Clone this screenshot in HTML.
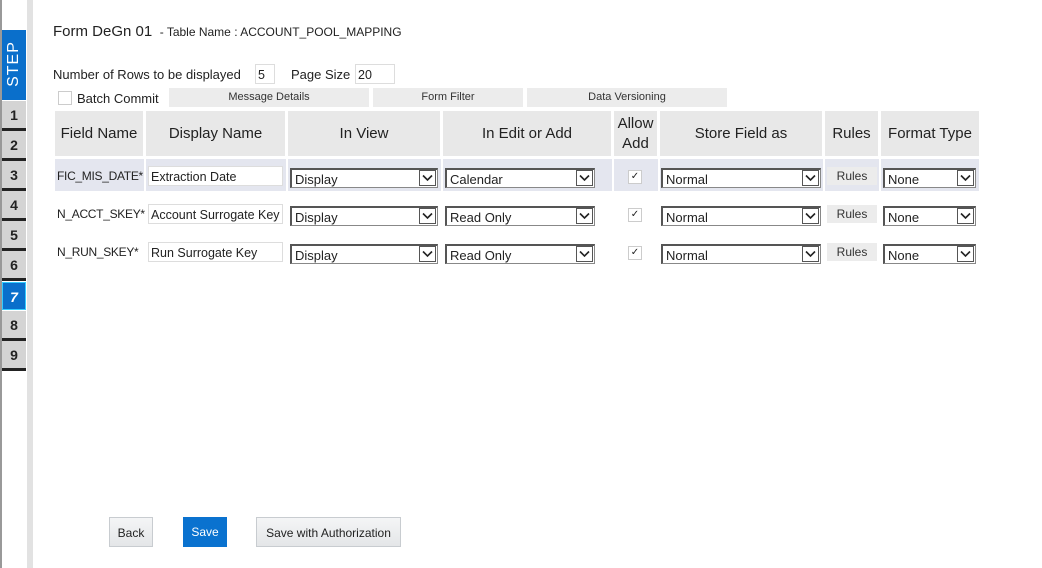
<!DOCTYPE html><html><head><style>
body{margin:0;width:1042px;height:568px;position:relative;background:#fff;font-family:"Liberation Sans",sans-serif;color:#222;overflow:hidden}
.a{position:absolute}
.step{position:absolute;left:2px;width:24px;height:27px;background:#d4d4d4;border-bottom:3px solid #222;font:bold 14px "Liberation Sans",sans-serif;text-align:center;line-height:28px;color:#222}
.th{position:absolute;top:111px;height:45px;background:#e8e8e8;font-size:15px;display:flex;align-items:center;justify-content:center;text-align:center;line-height:20px}
.sel{position:absolute;height:20px;border:1px solid #888;border-top:2px solid #555;border-left:2px solid #555;background:#fff;font-size:13px;line-height:20px;padding-left:3px;box-sizing:border-box}
.arr{position:absolute;right:1px;top:0px;width:17px;height:16px;border:1px solid #555;box-sizing:border-box;background:#fff}
.arr svg{position:absolute;left:2px;top:3px}
.inp{position:absolute;height:20px;border:1px solid #ddd;background:#fff;font-size:12.5px;line-height:20px;padding-left:2px;box-sizing:border-box;white-space:nowrap;overflow:hidden}
.btn{position:absolute;background:#ececec;font-size:11px;text-align:center;color:#333}
.cb{position:absolute;width:12px;height:12px;border:1px solid #ccc;background:#fff;font-size:10px;line-height:12px;text-align:center}
.fn{position:absolute;left:57px;font-size:12px;letter-spacing:-0.3px}
</style></head><body>
<div class="a" style="left:0;top:0;width:2px;height:568px;background:#999"></div>
<div class="a" style="left:27px;top:0;width:6px;height:568px;background:#e2e2e2"></div>
<div class="a" style="left:2px;top:30px;width:24px;height:70px;background:#0a6fcb;color:#fff"><div style="transform:rotate(-90deg);position:absolute;left:-18px;top:25px;width:60px;text-align:center;font-size:16px;letter-spacing:1px">STEP</div></div>
<div class="step" style="top:101px">1</div><div class="step" style="top:131px">2</div><div class="step" style="top:161px">3</div><div class="step" style="top:191px">4</div><div class="step" style="top:221px">5</div><div class="step" style="top:251px">6</div>
<div class="step" style="top:282px;background:#0a6fcb;color:#fff;border:1px solid #3cf;height:26px;width:22px;font-style:italic">7</div>
<div class="step" style="top:311px">8</div><div class="step" style="top:341px">9</div>

<div class="a" style="left:53px;top:23px;font-size:15px">Form DeGn 01 <span style="font-size:12px">&nbsp;- Table Name : ACCOUNT_POOL_MAPPING</span></div>
<div class="a" style="left:53px;top:67px;font-size:13px">Number of Rows to be displayed</div>
<div class="inp" style="left:255px;top:64px;width:20px">5</div>
<div class="a" style="left:291px;top:67px;font-size:13px">Page Size</div>
<div class="inp" style="left:355px;top:64px;width:40px">20</div>
<div class="cb" style="left:58px;top:91px"></div>
<div class="a" style="left:77px;top:91px;font-size:13px">Batch Commit</div>
<div class="btn" style="left:169px;top:88px;width:200px;height:19px;line-height:19px">Message Details</div>
<div class="btn" style="left:373px;top:88px;width:150px;height:19px;line-height:19px">Form Filter</div>
<div class="btn" style="left:527px;top:88px;width:200px;height:19px;line-height:19px">Data Versioning</div>

<div class="th" style="left:55px;width:88px">Field Name</div>
<div class="th" style="left:146px;width:139px">Display Name</div>
<div class="th" style="left:288px;width:152px">In View</div>
<div class="th" style="left:443px;width:168px">In Edit or Add</div>
<div class="th" style="left:614px;width:43px">Allow<br>Add</div>
<div class="th" style="left:660px;width:162px">Store Field as</div>
<div class="th" style="left:825px;width:53px">Rules</div>
<div class="th" style="left:881px;width:98px">Format Type</div>
<div class="a" style="left:55px;top:159px;width:924px;height:32px;background:#e4e6ef"></div>
<div class="a" style="left:144px;top:159px;width:2px;height:32px;background:#fff"></div>
<div class="a" style="left:286px;top:159px;width:2px;height:32px;background:#fff"></div>
<div class="a" style="left:441px;top:159px;width:2px;height:32px;background:#fff"></div>
<div class="a" style="left:612px;top:159px;width:2px;height:32px;background:#fff"></div>
<div class="a" style="left:658px;top:159px;width:2px;height:32px;background:#fff"></div>
<div class="a" style="left:823px;top:159px;width:2px;height:32px;background:#fff"></div>
<div class="a" style="left:879px;top:159px;width:2px;height:32px;background:#fff"></div>

<div id="rows"></div>
<script>
var rows=[["FIC_MIS_DATE*","Extraction Date","Calendar",166],["N_ACCT_SKEY*","Account Surrogate Key","Read Only",204],["N_RUN_SKEY*","Run Surrogate Key","Read Only",242]];
var arr='<div class="arr"><svg width="11" height="8"><path d="M1 1.5 L5.5 6 L10 1.5" stroke="#222" stroke-width="1.6" fill="none"/></svg></div>';
var h='';rows.forEach(function(r){var y=r[3];
h+='<div class="fn" style="top:'+(y+3)+'px">'+r[0]+'</div>';
h+='<div class="inp" style="left:148px;top:'+y+'px;width:135px">'+r[1]+'</div>';
h+='<div class="sel" style="left:290px;top:'+(y+2)+'px;width:148px">Display'+arr+'</div>';
h+='<div class="sel" style="left:445px;top:'+(y+2)+'px;width:150px">'+r[2]+arr+'</div>';
h+='<div class="cb" style="left:628px;top:'+(y+4)+'px">&#10003;</div>';
h+='<div class="sel" style="left:661px;top:'+(y+2)+'px;width:160px">Normal'+arr+'</div>';
h+='<div class="btn" style="left:827px;top:'+(y+1)+'px;width:50px;height:18px;line-height:18px;font-size:12px">Rules</div>';
h+='<div class="sel" style="left:883px;top:'+(y+2)+'px;width:93px">None'+arr+'</div>';});
document.getElementById('rows').innerHTML=h;
</script>
<div class="a" style="left:109px;top:517px;width:44px;height:30px;border:1px solid #c8ccd0;background:linear-gradient(#f4f5f6,#e4e6e8);font-size:12px;line-height:30px;text-align:center;box-sizing:border-box">Back</div>
<div class="a" style="left:183px;top:517px;width:44px;height:30px;background:#0a72cf;color:#fff;font-size:12px;line-height:30px;text-align:center">Save</div>
<div class="a" style="left:256px;top:517px;width:145px;height:30px;border:1px solid #c8ccd0;background:linear-gradient(#f4f5f6,#e4e6e8);font-size:12px;line-height:30px;text-align:center;box-sizing:border-box">Save with Authorization</div>
</body></html>
